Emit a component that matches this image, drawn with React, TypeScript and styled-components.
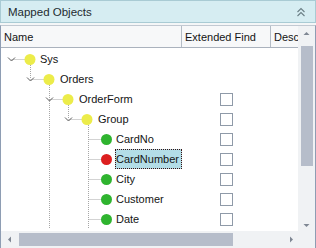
import React from "react";
import styled, { createGlobalStyle } from "styled-components";

type Node = {
  label: string;
  level: number;
  color: "yellow" | "green" | "red";
  expanded?: boolean;
  check?: boolean;
  selected?: boolean;
  hasNext?: boolean;
  guides: number[];
};

const CHEV = [10.5, 29.5, 48.5, 67.5, 87.5];
const DOT = [29, 48, 67, 86, 105.5];
const TEXT = [40, 60, 79, 98, 116];
const DOT_COLORS = { yellow: "#ecec4a", green: "#2fb42f", red: "#dc1f1f" };

const nodes: Node[] = [
  { label: "Sys", level: 0, color: "yellow", expanded: true, guides: [] },
  { label: "Orders", level: 1, color: "yellow", expanded: true, guides: [] },
  { label: "OrderForm", level: 2, color: "yellow", expanded: true, check: true, hasNext: true, guides: [] },
  { label: "Group", level: 3, color: "yellow", expanded: true, check: true, guides: [2] },
  { label: "CardNo", level: 4, color: "green", check: true, hasNext: true, guides: [2] },
  { label: "CardNumber", level: 4, color: "red", check: true, selected: true, hasNext: true, guides: [2] },
  { label: "City", level: 4, color: "green", check: true, hasNext: true, guides: [2] },
  { label: "Customer", level: 4, color: "green", check: true, hasNext: true, guides: [2] },
  { label: "Date", level: 4, color: "green", check: true, hasNext: true, guides: [2] },
];

const GlobalStyle = createGlobalStyle`
  html, body {
    margin: 0;
    padding: 0;
    background: #f4f6f7;
  }
  body {
    font-family: "Liberation Sans", Arial, sans-serif;
    font-size: 11px;
    color: #141414;
  }
`;

function TreeGutter({ node }: { node: Node }) {
  const L = node.level;
  const width = TEXT[L] - 2;
  const dash = "1 1";
  const stroke = "#a6a6a6";
  return (
    <svg width={width} height={20} style={{ flexShrink: 0 }}>
      {node.guides.map((g) => (
        <line key={g} x1={CHEV[g]} y1={0} x2={CHEV[g]} y2={20} stroke={stroke} strokeDasharray={dash} />
      ))}
      {L > 0 && (
        <line x1={CHEV[L]} y1={0} x2={CHEV[L]} y2={node.hasNext ? 20 : 10} stroke={stroke} strokeDasharray={dash} />
      )}
      <line x1={CHEV[L]} y1={10.5} x2={DOT[L] - 5} y2={10.5} stroke={stroke} strokeDasharray={dash} />
      {node.expanded && (
        <line x1={CHEV[L + 1]} y1={16} x2={CHEV[L + 1]} y2={20} stroke={stroke} strokeDasharray={dash} />
      )}
      {node.expanded && (
        <polyline
          points={`${CHEV[L] - 3.5},${8.5} ${CHEV[L]},${12} ${CHEV[L] + 3.5},${8.5}`}
          fill="none"
          stroke="#5e5e5e"
          strokeWidth={1}
        />
      )}
      <circle cx={DOT[L]} cy={10.5} r={5.5} fill={DOT_COLORS[node.color]} />
    </svg>
  );
}

function CollapseIcon() {
  return (
    <svg width="10" height="10" viewBox="0 0 10 10">
      <polyline points="1.5,5 5,1.5 8.5,5" fill="none" stroke="#6b7f86" strokeWidth="1.1" />
      <polyline points="1.5,9 5,5.5 8.5,9" fill="none" stroke="#6b7f86" strokeWidth="1.1" />
    </svg>
  );
}

function Arrow({ dir }: { dir: "up" | "down" | "left" | "right" }) {
  const pts = {
    up: "0.5,4 3.5,1 6.5,4",
    down: "0.5,1 3.5,4 6.5,1",
    left: "4,0.5 1,3.5 4,6.5",
    right: "1,0.5 4,3.5 1,6.5",
  }[dir];
  return (
    <svg width="7" height="7" viewBox="0 0 7 7">
      <polygon points={pts} fill="#7f8793" />
    </svg>
  );
}

export default function App() {
  return (
    <>
      <GlobalStyle />
      <Panel>
        <TitleBar>
          <Title>Mapped Objects</Title>
          <CollapseIcon />
        </TitleBar>
        <Grid>
          <Viewport>
            <HeaderRow>
              <HeaderCell $w={181}>Name</HeaderCell>
              <HeaderCell $w={89}>Extended Find</HeaderCell>
              <HeaderCell $w={28} $last>
                Description
              </HeaderCell>
            </HeaderRow>
            <Body>
              {nodes.map((n) => (
                <Row key={n.label}>
                  <NameCell>
                    <TreeGutter node={n} />
                    <Label $selected={n.selected}>{n.label}</Label>
                  </NameCell>
                  <FindCell>{n.check && <CheckBox />}</FindCell>
                  <DescCell />
                </Row>
              ))}
            </Body>
          </Viewport>
          <VScroll>
            <Arrow dir="up" />
            <VTrack>
              <VThumb />
            </VTrack>
            <Arrow dir="down" />
          </VScroll>
          <HScroll>
            <Arrow dir="left" />
            <HTrack>
              <HThumb />
            </HTrack>
            <Arrow dir="right" />
          </HScroll>
          <Corner />
        </Grid>
      </Panel>
    </>
  );
}

const Panel = styled.div`
  width: 316px;
  height: 248px;
  display: flex;
  flex-direction: column;
  gap: 2px;
  overflow: hidden;
`;

const TitleBar = styled.div`
  height: 23px;
  box-sizing: border-box;
  display: flex;
  align-items: center;
  justify-content: space-between;
  padding: 0 9px 0 7px;
  background: #d6edf2;
  border: 1px solid #a9cbd4;
`;

const Title = styled.span`
  font-size: 11.5px;
  color: #1e2b30;
`;

const Grid = styled.div`
  flex: 1;
  min-height: 0;
  display: grid;
  grid-template-columns: 1fr 17px;
  grid-template-rows: 1fr 17px;
  border-left: 1px solid #8e9db3;
  border-right: 1px solid #8e9db3;
  border-top: 1px solid #c2c9d2;
  background: #fff;
`;

const Viewport = styled.div`
  overflow: hidden;
  display: flex;
  flex-direction: column;
  min-width: 0;
`;

const HeaderRow = styled.div`
  height: 22px;
  flex-shrink: 0;
  display: flex;
  background: #f7f8f9;
  border-bottom: 1px solid #aab2bd;
  box-sizing: border-box;
`;

const HeaderCell = styled.div<{ $w: number; $last?: boolean }>`
  width: ${(p) => p.$w}px;
  flex-shrink: 0;
  box-sizing: border-box;
  padding-left: 3px;
  display: flex;
  align-items: center;
  overflow: hidden;
  white-space: nowrap;
  font-size: 11px;
  border-right: ${(p) => (p.$last ? "none" : "1px solid #b4bcc6")};
`;

const Body = styled.div`
  flex: 1;
  padding-top: 1px;
`;

const Row = styled.div`
  height: 20px;
  display: flex;
`;

const NameCell = styled.div`
  width: 181px;
  flex-shrink: 0;
  display: flex;
  align-items: center;
  overflow: hidden;
`;

const Label = styled.span<{ $selected?: boolean }>`
  font-size: 11px;
  white-space: nowrap;
  padding: 2px 1px;
  height: 20px;
  box-sizing: border-box;
  display: flex;
  align-items: center;
  flex: ${(p) => (p.$selected ? 1 : "none")};
  background: ${(p) => (p.$selected ? "#b3dde7" : "transparent")};
  outline: ${(p) => (p.$selected ? "1px dotted #3a1010" : "none")};
  outline-offset: -1px;
`;

const FindCell = styled.div`
  width: 89px;
  flex-shrink: 0;
  display: flex;
  align-items: center;
  justify-content: center;
`;

const DescCell = styled.div`
  flex: 1;
`;

const CheckBox = styled.span`
  width: 13px;
  height: 13px;
  box-sizing: border-box;
  border: 1px solid #8f9aa8;
  background: #fff;
`;

const VScroll = styled.div`
  grid-row: 1;
  grid-column: 2;
  background: #f0f2f4;
  display: flex;
  flex-direction: column;
  align-items: center;
  padding: 5px 0 1px;
`;

const VTrack = styled.div`
  flex: 1;
  width: 100%;
  display: flex;
  justify-content: center;
  padding-top: 8px;
`;

const VThumb = styled.div`
  width: 12px;
  height: 120px;
  background: #b6bdca;
`;

const HScroll = styled.div`
  grid-row: 2;
  grid-column: 1;
  background: #f0f2f4;
  display: flex;
  align-items: center;
  padding: 0 2px 0 6px;
`;

const HTrack = styled.div`
  flex: 1;
  display: flex;
  padding-left: 5px;
`;

const HThumb = styled.div`
  width: 214px;
  height: 13px;
  background: #b6bdca;
`;

const Corner = styled.div`
  grid-row: 2;
  grid-column: 2;
  background: #f0f2f4;
`;
